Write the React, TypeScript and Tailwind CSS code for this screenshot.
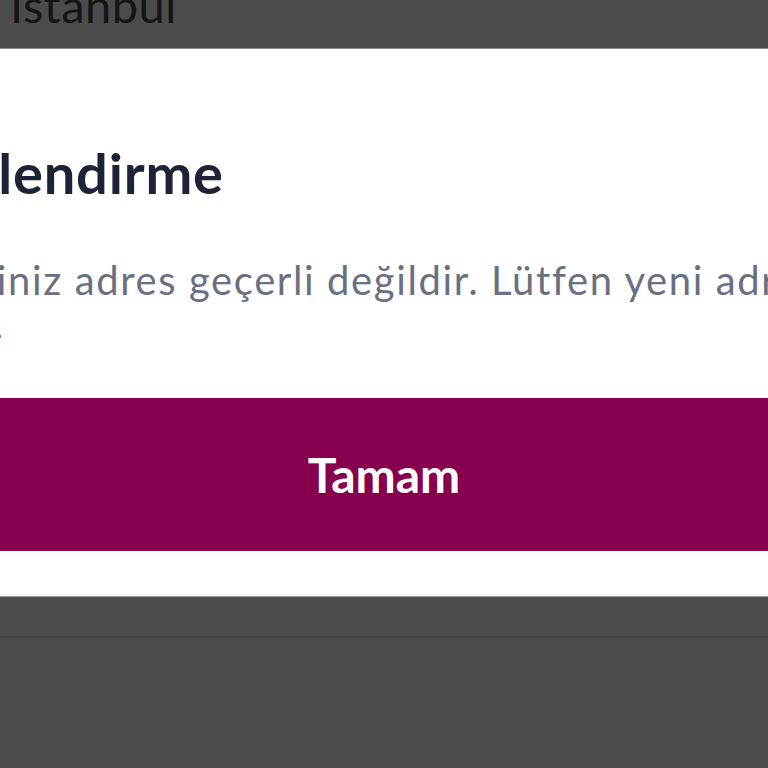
export default function App() {
  return (
    <div className="w-[768px] h-[768px] overflow-hidden bg-[#4b4b4b] flex flex-col" style={{ fontFamily: "Lato, 'Open Sans', sans-serif" }}>
      <div className="h-[49px] shrink-0 overflow-hidden border-b border-[#8a8a8a]">
        <div className="-mt-[22px] pl-[10px] text-[47px] leading-[54px] text-[#151515] tracking-[0.5px]">İstanbul</div>
      </div>
      <div className="h-[547px] shrink-0 bg-white overflow-hidden">
        <div className="w-[1100px] -ml-[166px] flex flex-col">
          <div className="pl-[52px] pt-[92px] text-[56px] leading-[64px] font-bold tracking-[0.8px] text-[#1e2235] whitespace-nowrap">Bilgilendirme</div>
          <div className="pl-[48px] mt-[53px] text-[40px] leading-[44px] tracking-[1.6px] text-[#6b6f82] whitespace-nowrap">
            <div>Girdiğiniz adres geçerli değildir. Lütfen yeni adres</div>
            <div className="-ml-[4px]">giriniz.</div>
          </div>
          <div className="mt-[52px] h-[153px] bg-[#87004e] flex items-center justify-center">
            <span className="text-[48px] font-bold text-white">Tamam</span>
          </div>
        </div>
      </div>
      <div className="h-[42px] shrink-0 border-t border-[#9a9a9a] border-b-2 border-b-[#444444] bg-[#4d4d4d]" />
      <div className="flex-1 bg-[#4b4b4b]" />
    </div>
  );
}
